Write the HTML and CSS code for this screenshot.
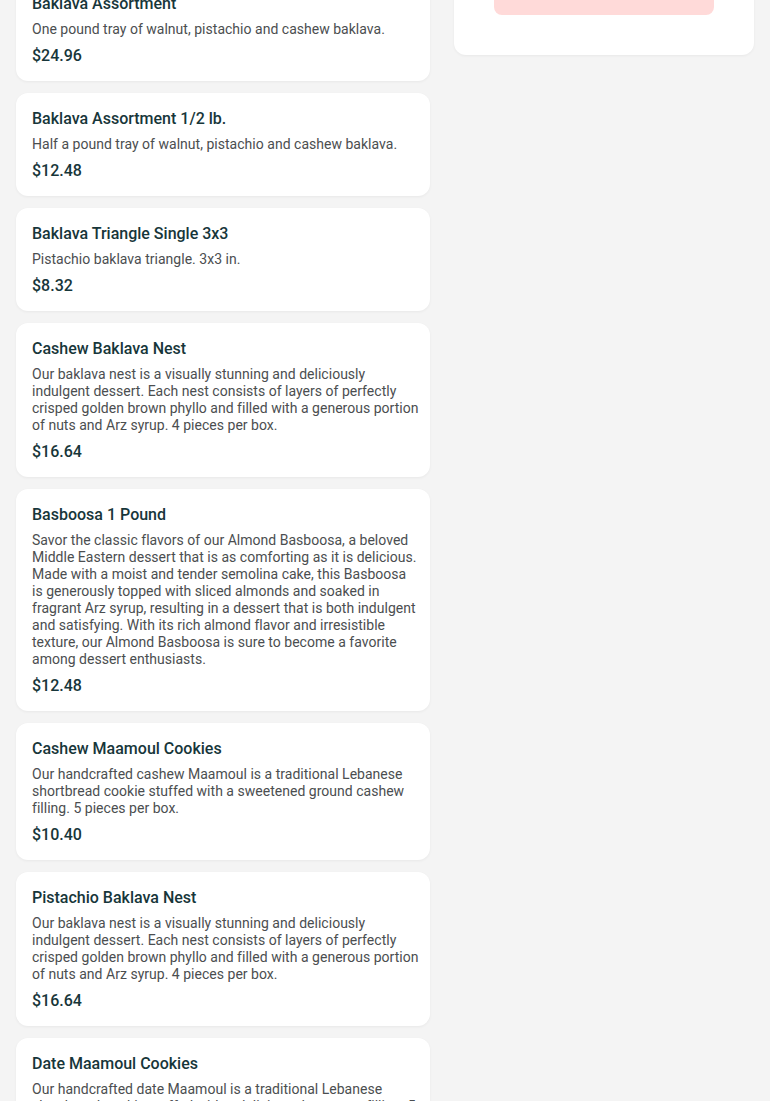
FILE: index.html
```html
<!DOCTYPE html>
<html lang="en">
<head>
<meta charset="utf-8">
<title>Menu</title>
<link rel="stylesheet" href="styles.css">
</head>
<body>
<div class="page">
  <main class="menu">
    <article class="card">
      <h3 class="title">Baklava Assortment</h3>
      <p class="desc">One pound tray of walnut, pistachio and cashew baklava.</p>
      <div class="price">$24.96</div>
    </article>
    <article class="card">
      <h3 class="title">Baklava Assortment 1/2 lb.</h3>
      <p class="desc">Half a pound tray of walnut, pistachio and cashew baklava.</p>
      <div class="price">$12.48</div>
    </article>
    <article class="card">
      <h3 class="title">Baklava Triangle Single 3x3</h3>
      <p class="desc">Pistachio baklava triangle. 3x3 in.</p>
      <div class="price">$8.32</div>
    </article>
    <article class="card">
      <h3 class="title">Cashew Baklava Nest</h3>
      <p class="desc">Our baklava nest is a visually stunning and deliciously indulgent dessert. Each nest consists of layers of perfectly crisped golden brown phyllo and filled with a generous portion of nuts and Arz syrup. 4 pieces per box.</p>
      <div class="price">$16.64</div>
    </article>
    <article class="card">
      <h3 class="title">Basboosa 1 Pound</h3>
      <p class="desc">Savor the classic flavors of our Almond Basboosa, a beloved Middle Eastern dessert that is as comforting as it is delicious. Made with a moist and tender semolina cake, this Basboosa is generously topped with sliced almonds and soaked in fragrant Arz syrup, resulting in a dessert that is both indulgent and satisfying. With its rich almond flavor and irresistible texture, our Almond Basboosa is sure to become a favorite among dessert enthusiasts.</p>
      <div class="price">$12.48</div>
    </article>
    <article class="card">
      <h3 class="title">Cashew Maamoul Cookies</h3>
      <p class="desc">Our handcrafted cashew Maamoul is a traditional Lebanese shortbread cookie stuffed with a sweetened ground cashew filling. 5 pieces per box.</p>
      <div class="price">$10.40</div>
    </article>
    <article class="card">
      <h3 class="title">Pistachio Baklava Nest</h3>
      <p class="desc">Our baklava nest is a visually stunning and deliciously indulgent dessert. Each nest consists of layers of perfectly crisped golden brown phyllo and filled with a generous portion of nuts and Arz syrup. 4 pieces per box.</p>
      <div class="price">$16.64</div>
    </article>
    <article class="card">
      <h3 class="title">Date Maamoul Cookies</h3>
      <p class="desc">Our handcrafted date Maamoul is a traditional Lebanese shortbread cookie stuffed with a delicious date paste filling. 5 pieces per box.</p>
      <div class="price">$10.40</div>
    </article>
  </main>
  <aside class="cart">
    <button class="checkout" type="button" disabled></button>
  </aside>
</div>
</body>
</html>
```

FILE: styles.css
```css
* { box-sizing: border-box; }
html, body {
  margin: 0;
  padding: 0;
  background: #f4f4f4;
  font-family: Roboto, "Liberation Sans", Arial, sans-serif;
}
.page {
  display: grid;
  grid-template-columns: 414px 300px;
  column-gap: 24px;
  align-items: start;
  padding: 0 16px;
  margin-top: -22px;
}
.menu {
  display: flex;
  flex-direction: column;
  gap: 12px;
}
.card {
  background: #fff;
  border-radius: 12px;
  padding: 16px 16px 15px;
  box-shadow: 0 1px 3px rgba(0, 0, 0, 0.05);
}
.title {
  margin: 0;
  font-size: 16px;
  line-height: 20px;
  font-weight: 500;
  color: #17363a;
}
.desc {
  margin: 7px -6px 0 0;
  font-size: 14px;
  line-height: 17px;
  font-weight: 400;
  letter-spacing: 0.02px;
  color: #4b4e50;
}
.price {
  margin-top: 8px;
  font-size: 16px;
  line-height: 20px;
  font-weight: 500;
  color: #17363a;
}
.cart {
  background: #fff;
  border-radius: 12px;
  padding: 12px 40px 40px;
  box-shadow: 0 1px 3px rgba(0, 0, 0, 0.05);
}
.checkout {
  display: block;
  width: 100%;
  height: 25px;
  border: 0;
  border-radius: 8px;
  background: #ffdad9;
}
```
